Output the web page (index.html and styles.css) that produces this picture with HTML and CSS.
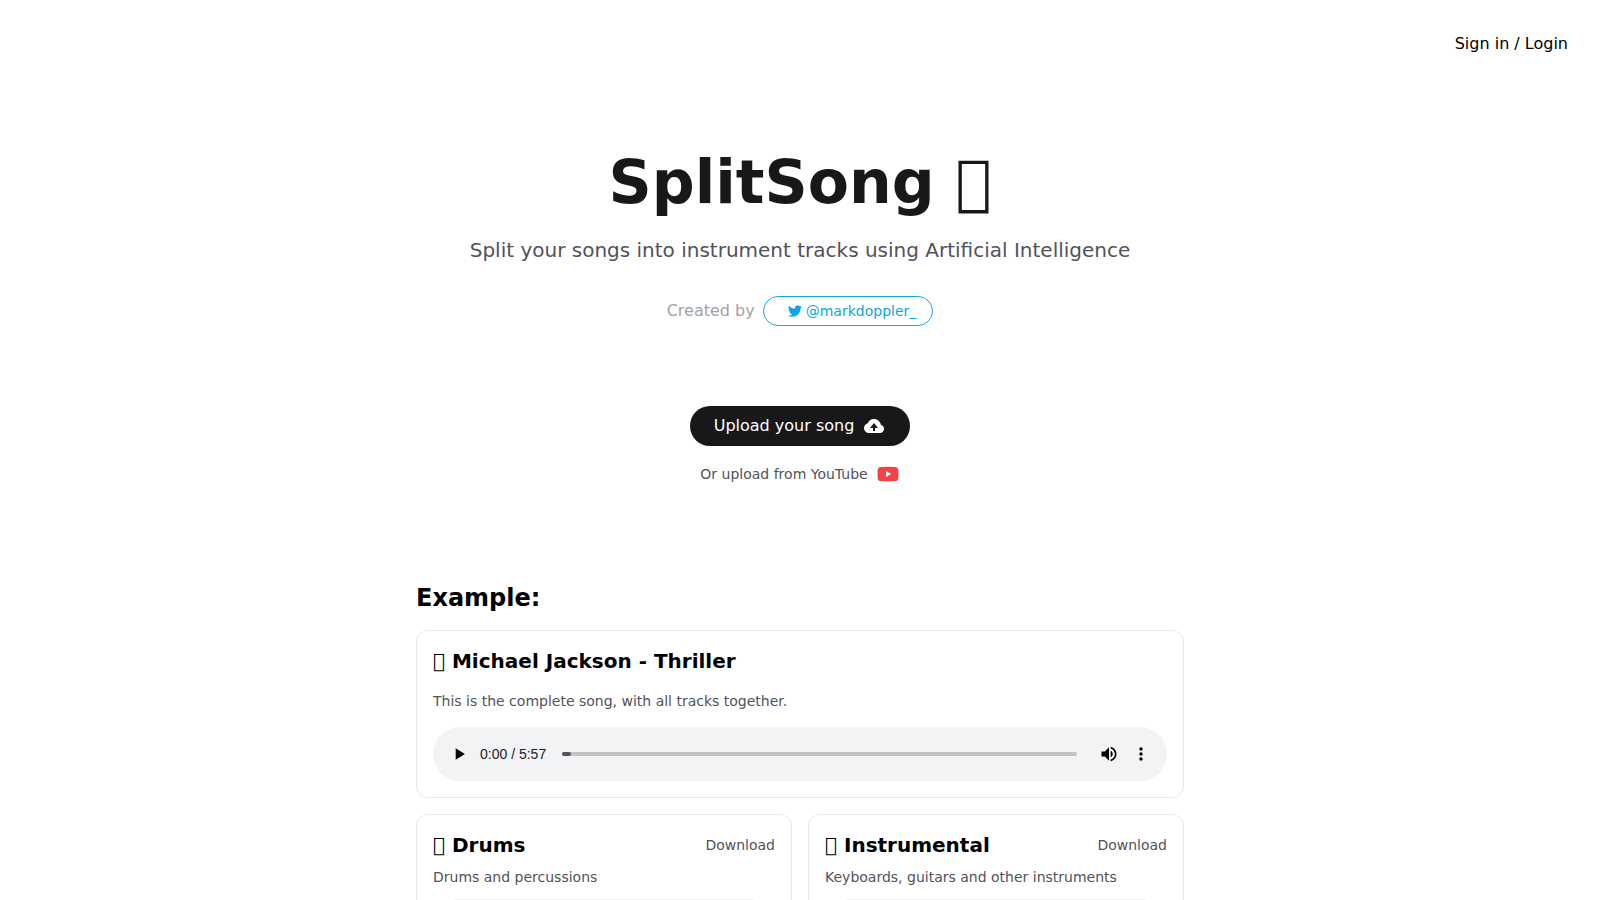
FILE: index.html
```html
<!DOCTYPE html>
<html lang="en">
<head>
<meta charset="utf-8">
<meta name="viewport" content="width=device-width, initial-scale=1">
<title>SplitSong</title>
<link rel="stylesheet" href="styles.css">
</head>
<body>
<header class="topbar"><a class="signin" href="#login">Sign in / Login</a></header>
<main class="page">
  <section class="hero">
    <h1 class="hero-title">SplitSong &#xF0001;</h1>
    <p class="tagline">Split your songs into instrument tracks using Artificial Intelligence</p>
    <div class="credit">
      <span>Created by</span>
      <a class="pill" href="#markdoppler_">
        <svg class="icon-bird" viewBox="0 0 24 24" aria-hidden="true"><path d="M23.953 4.57a10 10 0 01-2.825.775 4.958 4.958 0 002.163-2.723c-.951.555-2.005.959-3.127 1.184a4.92 4.92 0 00-8.384 4.482C7.69 8.095 4.067 6.13 1.64 3.162a4.822 4.822 0 00-.666 2.475c0 1.71.87 3.213 2.188 4.096a4.904 4.904 0 01-2.228-.616v.06a4.923 4.923 0 003.946 4.827 4.996 4.996 0 01-2.212.085 4.936 4.936 0 004.604 3.417 9.867 9.867 0 01-6.102 2.105c-.39 0-.779-.023-1.17-.067a13.995 13.995 0 007.557 2.209c9.053 0 13.998-7.496 13.998-13.985 0-.21 0-.42-.015-.63A9.935 9.935 0 0024 4.59z"/></svg>
        <span>@markdoppler_</span>
      </a>
    </div>
    <div class="actions">
      <button class="upload" type="button">Upload your song
        <svg class="icon-md" viewBox="0 0 24 24" aria-hidden="true"><path d="M18.944 11.112C18.507 7.67 15.56 5 12 5 9.244 5 6.85 6.611 5.757 9.15 3.609 9.792 2 11.82 2 14c0 2.757 2.243 5 5 5h11c2.206 0 4-1.794 4-4a4.01 4.01 0 0 0-3.056-3.888zM13 14v3h-2v-3H8l4-5 4 5h-3z"/></svg>
      </button>
      <button class="youtube" type="button">Or upload from YouTube
        <svg class="icon-md icon-red" viewBox="0 0 24 24" aria-hidden="true"><path fill-rule="evenodd" d="M5 4.900Q12 4.500 19 4.900Q22 5 22.300 7.500Q22.600 12 22.300 16.500Q22 19 19 19.100Q12 19.500 5 19.100Q2 19 1.700 16.500Q1.400 12 1.700 7.500Q2 5 5 4.900ZM10 9v6l5.200-3Z"/></svg>
      </button>
    </div>
  </section>
  <section class="examples">
    <h2 class="section-title">Example:</h2>
    <article class="card card-full">
      <h3 class="card-title">&#xF0001; Michael Jackson - Thriller</h3>
      <p class="card-text">This is the complete song, with all tracks together.</p>
      <div class="player">
        <button class="control" type="button" aria-label="Play"><svg class="icon-sm" viewBox="0 0 24 24"><path d="M8 5v14l11-7z"/></svg></button>
        <span class="time">0:00 / 5:57</span>
        <input class="seek" type="range" min="0" max="357" value="0" aria-label="Seek">
        <button class="control" type="button" aria-label="Mute"><svg class="icon-sm" viewBox="0 0 24 24"><path d="M3 9v6h4l5 5V4L7 9H3zm13.500 3c0-1.770-1.020-3.290-2.500-4.030v8.050c1.480-.730 2.500-2.250 2.500-4.020zM14 3.230v2.060c2.890.860 5 3.540 5 6.710s-2.110 5.850-5 6.710v2.060c4.010-.910 7-4.490 7-8.770s-2.990-7.860-7-8.770z"/></svg></button>
        <button class="control" type="button" aria-label="More options"><svg class="icon-sm" viewBox="0 0 24 24"><path d="M12 8c1.100 0 2-.9 2-2s-.9-2-2-2-2 .9-2 2 .9 2 2 2zm0 2c-1.100 0-2 .9-2 2s.9 2 2 2 2-.9 2-2-.9-2-2-2zm0 6c-1.100 0-2 .9-2 2s.9 2 2 2 2-.9 2-2-.9-2-2-2z"/></svg></button>
      </div>
    </article>
    <div class="tracks">
      <article class="card">
        <div class="card-head"><h3 class="card-title">&#xF0001; Drums</h3><a class="download" href="#drums">Download</a></div>
        <p class="card-text">Drums and percussions</p>
        <div class="player"></div>
      </article>
      <article class="card">
        <div class="card-head"><h3 class="card-title">&#xF0001; Instrumental</h3><a class="download" href="#instrumental">Download</a></div>
        <p class="card-text">Keyboards, guitars and other instruments</p>
        <div class="player"></div>
      </article>
    </div>
  </section>
</main>
</body>
</html>
```
FILE: styles.css
```css
* { box-sizing: border-box; margin: 0; }
html { scrollbar-width: none; }
body { font-family: "DejaVu Sans", sans-serif; font-size: 16px; line-height: 24px; color: #000; background: #fff; }
a { color: inherit; text-decoration: none; }
button { font: inherit; color: inherit; border: 0; background: none; padding: 0; cursor: pointer; }
svg { display: block; fill: currentColor; flex: none; }
.topbar { display: flex; justify-content: flex-end; padding: 32px; }
.page { max-width: 800px; margin: 0 auto; padding: 64px 16px 32px; }
.hero { display: flex; flex-direction: column; align-items: center; text-align: center; }
.hero-title { font-size: 60px; line-height: 60px; color: #18181b; }
.tagline { margin-top: 24px; font-size: 20px; line-height: 28px; color: #52525b; }
.credit { display: flex; align-items: center; gap: 8px; margin-top: 32px; color: #a3a3a3; }
.pill { display: flex; align-items: center; gap: 4px; padding: 4px 16px 4px 24px; border: 1px solid #0ea5e9; border-radius: 16px; font-size: 14px; line-height: 20px; color: #0ea5e9; }
.icon-bird { width: 14px; height: 14px; }
.icon-md { width: 24px; height: 24px; }
.icon-red { color: #ef4444; }
.icon-sm { width: 20px; height: 20px; }
.actions { display: flex; flex-direction: column; align-items: center; gap: 16px; margin-top: 80px; }
.upload { display: flex; align-items: center; gap: 8px; padding: 8px 24px; border-radius: 20px; background: #18181b; color: #fff; }
.youtube { display: flex; align-items: center; gap: 8px; font-size: 14px; color: #52525b; }
.examples { margin-top: 96px; }
.section-title { font-size: 24px; line-height: 32px; margin-bottom: 16px; }
.card { border: 1px solid #e5e7eb; border-radius: 12px; padding: 16px; }
.card-title { font-size: 20px; line-height: 28px; }
.card-head { display: flex; justify-content: space-between; align-items: center; }
.card-text { margin: 8px 0 12px; font-size: 14px; line-height: 20px; color: #52525b; }
.card-full .card-text { margin: 16px 0; }
.download { font-size: 14px; line-height: 20px; color: #52525b; }
.tracks { display: grid; grid-template-columns: 1fr 1fr; gap: 16px; margin-top: 16px; }
.player { display: flex; align-items: center; height: 54px; padding: 0 10px; border-radius: 27px; background: #f1f3f4; }
.control { display: flex; align-items: center; justify-content: center; width: 32px; height: 32px; color: #000; }
.time { margin: 0 16px 0 5px; font-family: "Liberation Sans", Arial, sans-serif; font-size: 14px; color: #202124; }
.seek { flex: 1; appearance: none; height: 4px; margin: 0 16px 0 0; border-radius: 2px; background: #c1c2c3; }
.seek::-webkit-slider-thumb { appearance: none; width: 9px; height: 4px; border-radius: 2px; background: #52525b; }
```
